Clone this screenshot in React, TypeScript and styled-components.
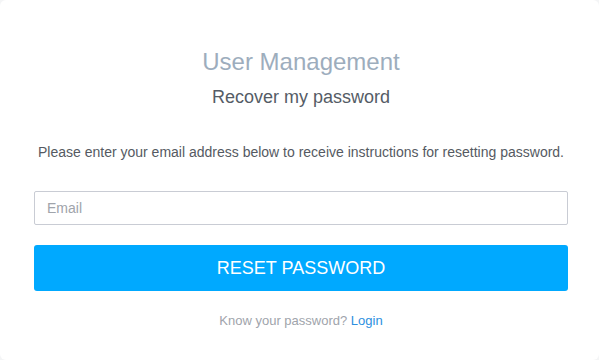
import React from "react";
import styled, { createGlobalStyle } from "styled-components";

const Global = createGlobalStyle`
  html, body { margin: 0; padding: 0; background: #f4f5f6; }
  body { font-family: "Liberation Sans", Arial, sans-serif; }
  * { box-sizing: border-box; }
`;

const Card = styled.div`
  width: 599px;
  height: 360px;
  background: #ffffff;
  border-radius: 6px;
  padding: 48px 31px 0 34px;
  display: flex;
  flex-direction: column;
  align-items: stretch;
`;

const Title = styled.h1`
  margin: 0;
  text-align: center;
  font-size: 24px;
  font-weight: 400;
  line-height: 28px;
  color: #9dadbd;
`;

const Subtitle = styled.h2`
  margin: 10px 0 0;
  text-align: center;
  font-size: 18px;
  font-weight: 400;
  line-height: 22px;
  color: #555c66;
`;

const Intro = styled.p`
  margin: 35px 0 0;
  text-align: center;
  font-size: 14px;
  line-height: 18px;
  color: #555a62;
`;

const Input = styled.input`
  margin-top: 30px;
  height: 34px;
  width: 100%;
  border: 1px solid #c9ccd4;
  border-radius: 2px;
  padding: 0 12px;
  font-family: inherit;
  font-size: 14px;
  color: #555;
  outline: none;
  caret-color: #333;
  &::placeholder { color: #a0a4ab; }
`;

const Button = styled.button`
  margin-top: 20px;
  height: 46px;
  width: 100%;
  border: none;
  border-radius: 3px;
  background: #00a9ff;
  color: #ffffff;
  font-family: inherit;
  font-size: 18px;
  cursor: pointer;
`;

const Footer = styled.p`
  margin: 22px 0 0;
  text-align: center;
  font-size: 13px;
  line-height: 16px;
  color: #a0a4ab;
`;

const Link = styled.a`
  color: #2d8fe0;
  text-decoration: none;
`;

export default function App() {
  return (
    <>
      <Global />
      <Card>
        <Title>User Management</Title>
        <Subtitle>Recover my password</Subtitle>
        <Intro>Please enter your email address below to receive instructions for resetting password.</Intro>
        <Input type="email" placeholder="Email" autoFocus />
        <Button>RESET PASSWORD</Button>
        <Footer>
          Know your password? <Link href="#">Login</Link>
        </Footer>
      </Card>
    </>
  );
}
